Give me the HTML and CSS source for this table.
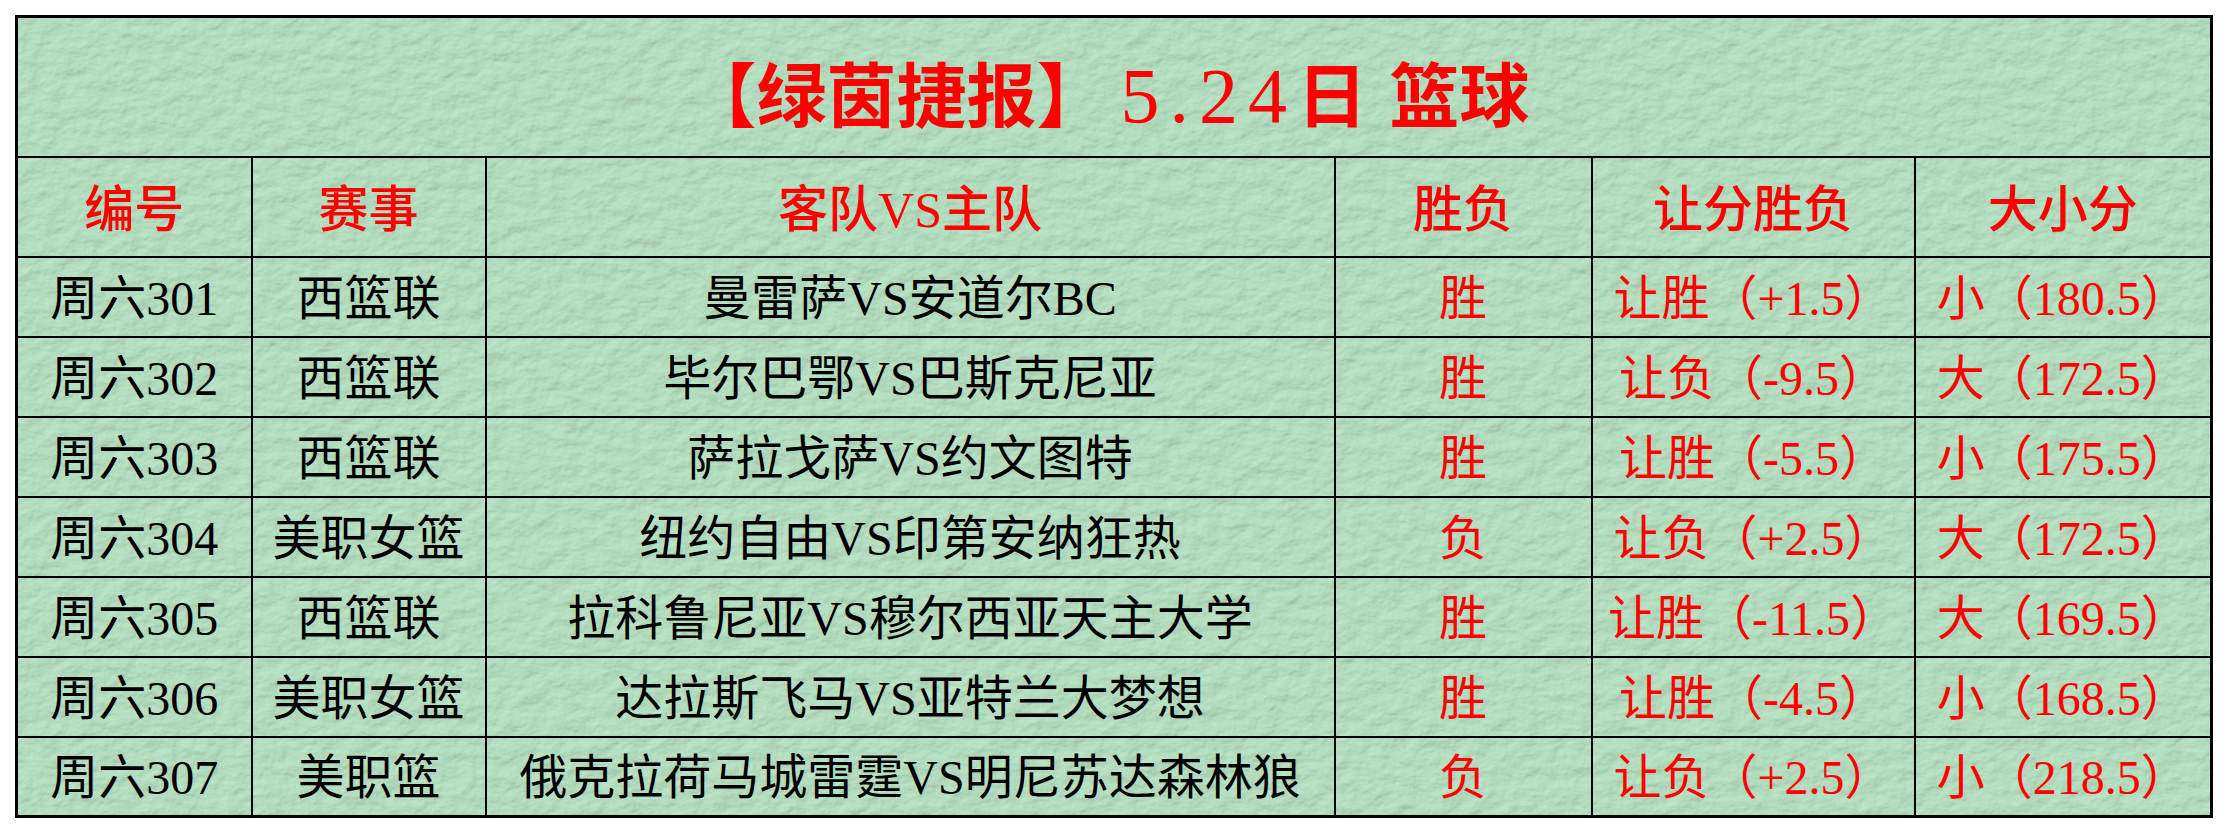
FILE: index.html
```html
<!DOCTYPE html>
<html lang="zh-CN">
<head>
<meta charset="utf-8">
<title>绿茵捷报 5.24日 篮球</title>
<link rel="stylesheet" href="styles.css">
</head>
<body>
<div class="page">
  <div class="board">
    <svg class="texture" xmlns="http://www.w3.org/2000/svg" aria-hidden="true">
      <filter id="paper" x="0" y="0" width="100%" height="100%">
        <feTurbulence type="fractalNoise" baseFrequency="0.05 0.07" numOctaves="4" seed="7" result="noise"/>
        <feDiffuseLighting in="noise" surfaceScale="1.8" diffuseConstant="1" lighting-color="#bce6c7">
          <feDistantLight azimuth="235" elevation="64"/>
        </feDiffuseLighting>
      </filter>
      <rect width="100%" height="100%" filter="url(#paper)"/>
    </svg>
    <table class="report">
      <colgroup>
        <col class="c-id">
        <col class="c-league">
        <col class="c-match">
        <col class="c-wl">
        <col class="c-hc">
        <col class="c-ou">
      </colgroup>
      <thead>
        <tr class="title-row">
          <th colspan="6" class="title">【绿茵捷报】<span class="num">5.24</span>日 篮球</th>
        </tr>
        <tr class="head-row">
          <th>编号</th>
          <th>赛事</th>
          <th>客队VS主队</th>
          <th>胜负</th>
          <th>让分胜负</th>
          <th>大小分</th>
        </tr>
      </thead>
      <tbody>
        <tr><td>周六301</td><td>西篮联</td><td>曼雷萨VS安道尔BC</td><td class="red">胜</td><td class="red">让胜（+1.5）</td><td class="red">小（180.5）</td></tr>
        <tr><td>周六302</td><td>西篮联</td><td>毕尔巴鄂VS巴斯克尼亚</td><td class="red">胜</td><td class="red">让负（-9.5）</td><td class="red">大（172.5）</td></tr>
        <tr><td>周六303</td><td>西篮联</td><td>萨拉戈萨VS约文图特</td><td class="red">胜</td><td class="red">让胜（-5.5）</td><td class="red">小（175.5）</td></tr>
        <tr><td>周六304</td><td>美职女篮</td><td>纽约自由VS印第安纳狂热</td><td class="red">负</td><td class="red">让负（+2.5）</td><td class="red">大（172.5）</td></tr>
        <tr><td>周六305</td><td>西篮联</td><td>拉科鲁尼亚VS穆尔西亚天主大学</td><td class="red">胜</td><td class="red">让胜（-11.5）</td><td class="red">大（169.5）</td></tr>
        <tr><td>周六306</td><td>美职女篮</td><td>达拉斯飞马VS亚特兰大梦想</td><td class="red">胜</td><td class="red">让胜（-4.5）</td><td class="red">小（168.5）</td></tr>
        <tr><td>周六307</td><td>美职篮</td><td>俄克拉荷马城雷霆VS明尼苏达森林狼</td><td class="red">负</td><td class="red">让负（+2.5）</td><td class="red">小（218.5）</td></tr>
      </tbody>
    </table>
  </div>
</div>
</body>
</html>
```

FILE: styles.css
```css
html, body {
  margin: 0;
  padding: 0;
  background: #ffffff;
}

.page {
  padding: 15px 0 0 15px;
}

.board {
  position: relative;
  width: 2195px;
  background: #a8cfb2;
}

.texture {
  position: absolute;
  left: 0;
  top: 0;
  width: 100%;
  height: 100%;
  z-index: 0;
}

.report {
  position: relative;
  z-index: 1;
  width: 2195px;
  border-collapse: collapse;
  table-layout: fixed;
  border: 3px solid #000;
  font-family: "Liberation Serif", "Noto Sans CJK SC", serif;
  font-size: 48px;
  color: #000;
}

.c-id { width: 235px; }
.c-league { width: 234px; }
.c-match { width: 849px; }
.c-wl { width: 257px; }
.c-hc { width: 323px; }
.c-ou { width: 297px; }

.report th,
.report td {
  border: 2px solid #000;
  padding: 0;
  text-align: center;
  vertical-align: middle;
  white-space: nowrap;
  line-height: 1;
}

.report th {
  font-weight: 500;
  font-size: 50px;
  color: #ff0000;
}

.title-row { height: 140px; }
.head-row { height: 100px; }
.report tbody tr { height: 80px; }

.report .title {
  font-size: 70px;
  font-weight: 700;
  word-spacing: 5px;
  padding-top: 18px;
  padding-right: 12px;
}

.title .num {
  font-size: 78px;
  font-weight: 400;
  letter-spacing: 10px;
  margin-left: 14px;
}

.head-row th {
  padding-top: 6px;
}

.report td {
  padding-top: 4px;
}

.red {
  color: #ff0000;
}
```
